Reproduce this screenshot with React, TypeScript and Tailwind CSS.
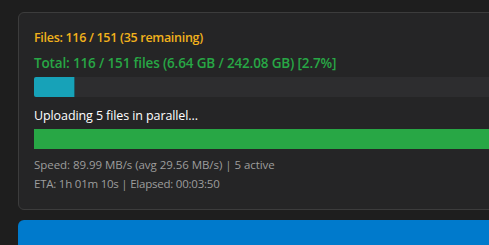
export default function App() {
  const percent = 2.7;
  return (
    <div className="h-[245px] w-full overflow-hidden bg-[#1e1e1e] pl-[18px] pt-[12px] font-['Open_Sans','Noto_Sans',sans-serif]">
      {/* Upload progress card */}
      <div className="w-[600px] h-[198px] rounded-md border border-[#3c3c3c] bg-[#252526] px-[15px] pt-[15px]">
        <div className="text-[12.5px] leading-[20px] font-semibold tracking-[-0.3px] text-[#f2b21c]">
          Files: 116 / 151 (35 remaining)
        </div>
        <div className="mt-[5px] text-[13.5px] leading-[20px] font-semibold tracking-[-0.15px] text-[#28a745]">
          Total: 116 / 151 files (6.64 GB / 242.08 GB) [{percent}%]
        </div>
        <div className="mt-[4px] h-[20px] bg-[#2d2d2f] rounded-[2px] overflow-hidden">
          <div className="h-full w-[41px] bg-[#17a2b8] border-r border-[#1b5a66]" />
        </div>
        <div className="mt-[9px] text-[12.5px] leading-[20px] tracking-[-0.1px] text-white">
          Uploading 5 files in parallel...
        </div>
        <div className="mt-[3px] h-[20px] bg-[#28a745]" />
        <div className="mt-[7px] text-[11.5px] leading-[18px] tracking-[-0.05px] text-[#9d9d9d]">
          Speed: 89.99 MB/s (avg 29.56 MB/s) | 5 active
        </div>
        <div className="mt-[1px] text-[11.5px] leading-[18px] tracking-[-0.23px] text-[#9d9d9d]">
          ETA: 1h 01m 10s | Elapsed: 00:03:50
        </div>
      </div>

      {/* Action button */}
      <button className="mt-[10px] block h-[40px] w-[600px] rounded-md bg-[#007acc]" />
    </div>
  );
}
